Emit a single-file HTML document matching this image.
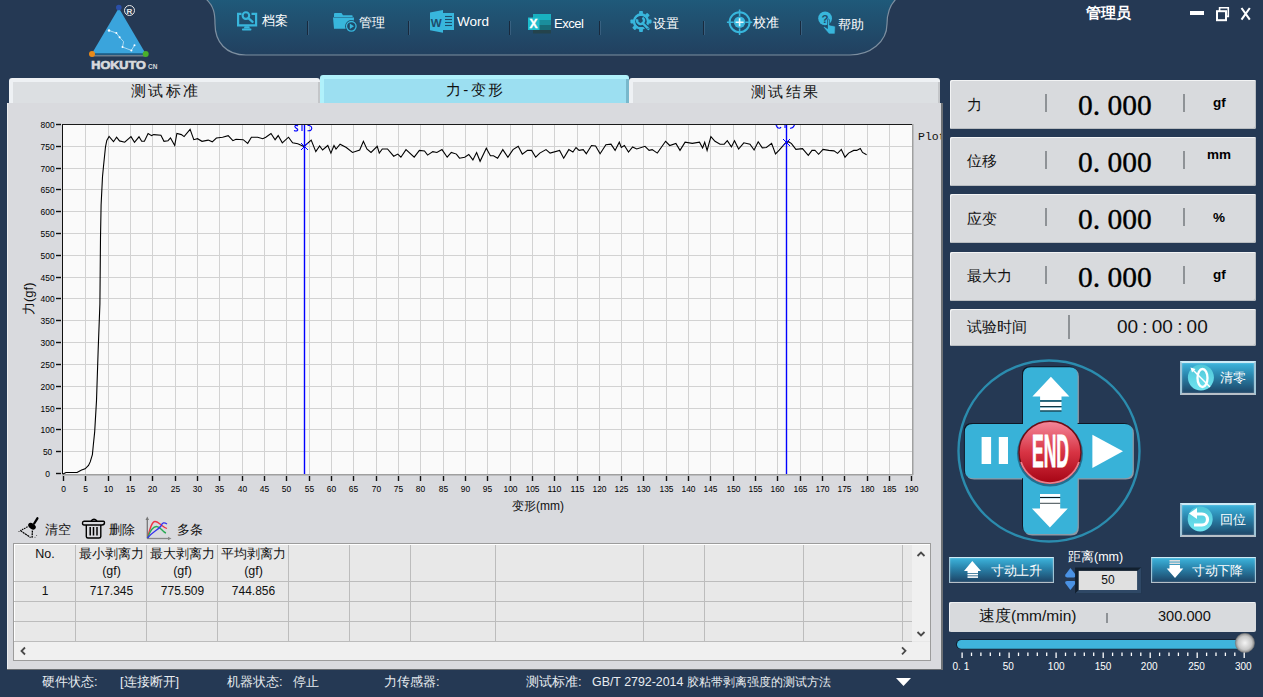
<!DOCTYPE html>
<html><head><meta charset="utf-8">
<style>
*{margin:0;padding:0;box-sizing:border-box}
html,body{width:1263px;height:697px;overflow:hidden;background:#253954;font-family:"Liberation Sans",sans-serif;}
.abs{position:absolute}
.ax{font-family:"Liberation Sans",sans-serif;font-size:9.8px;fill:#000}
.cur{font-family:"Liberation Sans",sans-serif;font-size:10px;fill:#2a2aff}
.nav{position:absolute;color:#fff;font-size:13px;line-height:14px;white-space:nowrap}
.sep{position:absolute;width:1px;height:13.5px;background:#182a3e;box-shadow:1px 0 0 rgba(140,170,200,0.22)}
.tab{position:absolute;top:78px;height:25px;background:linear-gradient(#eef1f4 0,#eef1f4 4px,transparent 4px),linear-gradient(90deg,#eef1f4 0,#eef1f4 4px,transparent 4px,transparent calc(100% - 2px),#c4c6c9 calc(100% - 2px)),#dcdfe2;border-radius:3px 3px 0 0;font-size:15px;text-align:center;line-height:26px;color:#111;letter-spacing:2.6px;text-indent:2.6px}
.vbox{position:absolute;left:950px;width:306px;background:#d8dadd;border-radius:2px;box-shadow:inset 1px 1px 0 #f2f3f4, inset -1px -1px 0 #b8bcc0}
.vlab{position:absolute;left:17px;font-size:14.5px;color:#111}
.vsep{position:absolute;width:1.5px;background:#8e9296}
.vnum{position:absolute;left:128px;font-family:"Liberation Serif",serif;font-size:29.5px;color:#000;white-space:pre;-webkit-text-stroke:0.35px #000}
.vunit{position:absolute;left:263px;font-size:13.5px;font-weight:bold;color:#000}
.st{position:absolute;top:674px;font-size:12.8px;color:#e8ecf0;white-space:nowrap}
.tbl td{border-right:1px solid #b8b8b8;border-bottom:1px solid #b8b8b8}
.btn{position:absolute;background:linear-gradient(#3db4dc,#2a86ae 40%,#1d4466);border:2px solid;border-color:#cdeaf6 #9ec4d6 #b8c0c8 #9ec4d6;box-shadow:inset 0 0 2px rgba(255,255,255,0.4);color:#fff;font-size:13px}
</style></head><body>
<!-- header nav -->
<svg class="abs" style="left:0;top:0" width="1263" height="70">
 <defs><linearGradient id="hg" x1="0" y1="0" x2="0" y2="1"><stop offset="0" stop-color="#1f5a7a"/><stop offset="1" stop-color="#22405f"/></linearGradient></defs>
 <path d="M206,-1 C214,6 215,14 215,24 C215,42 226,55 246,55 L850,55 C870,55 887,42 887,24 C887,14 889,6 896,-1 Z" fill="url(#hg)" stroke="#7d8fa0" stroke-width="1.2"/>
</svg>
<!-- logo -->
<svg class="abs" style="left:80px;top:0" width="90" height="75">
 <polygon points="38.8,8 11.8,53.8 65.7,53.8" fill="#3aa4dc"/>
 <rect x="12" y="53.3" width="54" height="1.6" fill="#1a5e8a"/><rect x="12" y="54.9" width="54" height="1.6" fill="#6b7c8c"/>
 <circle cx="38.8" cy="7.5" r="2.8" fill="#2a4fa8"/>
 <circle cx="12" cy="54" r="3" fill="#e88a1a"/>
 <circle cx="65.7" cy="54" r="3" fill="#4ab02a"/>
 <circle cx="49.5" cy="10.5" r="5" fill="none" stroke="#e8e8e8" stroke-width="1"/>
 <text x="49.5" y="13.7" text-anchor="middle" font-size="8" font-weight="bold" fill="#e8e8e8" font-family="Liberation Sans">R</text>
 <polyline points="29,30.5 36.4,33 39.6,37.3 43.6,41.7 42.5,47 51.4,50.4 54.5,45.2" fill="none" stroke="#d8eefa" stroke-width="0.7"/>
 <g fill="#fff"><circle cx="29" cy="30.5" r="1.2"/><circle cx="36.4" cy="33" r="1"/><circle cx="39.6" cy="37.3" r="1"/><circle cx="42.5" cy="47" r="1"/><circle cx="51.4" cy="50.4" r="1"/><circle cx="54.5" cy="45.2" r="1"/></g>
 <text x="11.3" y="69.2" font-size="11.2" font-weight="bold" fill="#d8dadd" stroke="#d8dadd" stroke-width="0.7" font-family="Liberation Sans" textLength="54.5" lengthAdjust="spacingAndGlyphs">HOKUTO</text>
 <text x="68" y="69" font-size="6.5" font-weight="bold" fill="#d5d8dc" font-family="Liberation Sans">CN</text>
</svg>
<!-- nav items -->
<div class="nav" style="left:262px;top:14px">档案</div>
<div class="nav" style="left:359px;top:16px">管理</div>
<div class="nav" style="left:457px;top:15px;font-size:13.5px">Word</div>
<div class="nav" style="left:554px;top:17px;letter-spacing:-0.5px">Excel</div>
<div class="nav" style="left:653px;top:16.5px">设置</div>
<div class="nav" style="left:753px;top:16px">校准</div>
<div class="nav" style="left:838px;top:17.5px">帮助</div>
<div class="sep" style="left:307px;top:21px"></div>
<div class="sep" style="left:408px;top:21px"></div>
<div class="sep" style="left:509px;top:21px"></div>
<div class="sep" style="left:599px;top:21px"></div>
<div class="sep" style="left:703px;top:21px"></div>
<div class="sep" style="left:800px;top:21px"></div>
<!-- top right -->
<div class="abs" style="left:1086px;top:4px;color:#fff;font-size:15px;font-weight:bold">管理员</div>
<div class="abs" style="left:1190px;top:11px;width:14px;height:4px;background:#fff"></div>
<svg class="abs" style="left:1215px;top:6px" width="16" height="16"><rect x="2" y="5.2" width="9" height="9" fill="none" stroke="#fff" stroke-width="2"/><path d="M4.6,5 V1.8 H13.3 V10.4 H11" fill="none" stroke="#fff" stroke-width="1.6"/></svg>
<svg class="abs" style="left:1240px;top:7px" width="12" height="14"><path d="M1.5,1 L9.8,12.6 M9.8,1 L1.5,12.6" stroke="#fff" stroke-width="2.1"/></svg>

<!-- left panel -->
<div class="tab" style="left:9px;width:311px">测试标准</div>
<div class="tab" style="left:320px;width:309px;top:75px;height:28px;background:linear-gradient(#b0f1fb 0,#b0f1fb 4px,transparent 4px),linear-gradient(90deg,#b0f1fb 0,#b0f1fb 4px,transparent 4px,transparent calc(100% - 3px),#78b8cc calc(100% - 3px)),#9cdff1;line-height:29px">力-变形</div>
<div class="tab" style="left:629px;width:311px;line-height:27px">测试结果</div>
<div class="abs" style="left:7px;top:103px;width:936px;height:567px;background:#d9dade;border-right:2px solid #6e7276;border-bottom:1.5px solid #6a6e72;box-shadow:inset 1px 0 0 #eceef0"></div>

<svg class="abs" style="left:0;top:0" width="945" height="697">
<rect x="62" y="124" width="850" height="350" fill="#fafafa"/>
<line x1="85.5" y1="125" x2="85.5" y2="474" stroke="#d2d2d2" stroke-width="1"/>
<line x1="108.5" y1="125" x2="108.5" y2="474" stroke="#d2d2d2" stroke-width="1"/>
<line x1="130.5" y1="125" x2="130.5" y2="474" stroke="#d2d2d2" stroke-width="1"/>
<line x1="152.5" y1="125" x2="152.5" y2="474" stroke="#d2d2d2" stroke-width="1"/>
<line x1="175.5" y1="125" x2="175.5" y2="474" stroke="#d2d2d2" stroke-width="1"/>
<line x1="197.5" y1="125" x2="197.5" y2="474" stroke="#d2d2d2" stroke-width="1"/>
<line x1="219.5" y1="125" x2="219.5" y2="474" stroke="#d2d2d2" stroke-width="1"/>
<line x1="242.5" y1="125" x2="242.5" y2="474" stroke="#d2d2d2" stroke-width="1"/>
<line x1="264.5" y1="125" x2="264.5" y2="474" stroke="#d2d2d2" stroke-width="1"/>
<line x1="286.5" y1="125" x2="286.5" y2="474" stroke="#d2d2d2" stroke-width="1"/>
<line x1="309.5" y1="125" x2="309.5" y2="474" stroke="#d2d2d2" stroke-width="1"/>
<line x1="331.5" y1="125" x2="331.5" y2="474" stroke="#d2d2d2" stroke-width="1"/>
<line x1="353.5" y1="125" x2="353.5" y2="474" stroke="#d2d2d2" stroke-width="1"/>
<line x1="376.5" y1="125" x2="376.5" y2="474" stroke="#d2d2d2" stroke-width="1"/>
<line x1="398.5" y1="125" x2="398.5" y2="474" stroke="#d2d2d2" stroke-width="1"/>
<line x1="420.5" y1="125" x2="420.5" y2="474" stroke="#d2d2d2" stroke-width="1"/>
<line x1="443.5" y1="125" x2="443.5" y2="474" stroke="#d2d2d2" stroke-width="1"/>
<line x1="465.5" y1="125" x2="465.5" y2="474" stroke="#d2d2d2" stroke-width="1"/>
<line x1="487.5" y1="125" x2="487.5" y2="474" stroke="#d2d2d2" stroke-width="1"/>
<line x1="510.5" y1="125" x2="510.5" y2="474" stroke="#d2d2d2" stroke-width="1"/>
<line x1="532.5" y1="125" x2="532.5" y2="474" stroke="#d2d2d2" stroke-width="1"/>
<line x1="554.5" y1="125" x2="554.5" y2="474" stroke="#d2d2d2" stroke-width="1"/>
<line x1="577.5" y1="125" x2="577.5" y2="474" stroke="#d2d2d2" stroke-width="1"/>
<line x1="599.5" y1="125" x2="599.5" y2="474" stroke="#d2d2d2" stroke-width="1"/>
<line x1="621.5" y1="125" x2="621.5" y2="474" stroke="#d2d2d2" stroke-width="1"/>
<line x1="643.5" y1="125" x2="643.5" y2="474" stroke="#d2d2d2" stroke-width="1"/>
<line x1="666.5" y1="125" x2="666.5" y2="474" stroke="#d2d2d2" stroke-width="1"/>
<line x1="688.5" y1="125" x2="688.5" y2="474" stroke="#d2d2d2" stroke-width="1"/>
<line x1="710.5" y1="125" x2="710.5" y2="474" stroke="#d2d2d2" stroke-width="1"/>
<line x1="733.5" y1="125" x2="733.5" y2="474" stroke="#d2d2d2" stroke-width="1"/>
<line x1="755.5" y1="125" x2="755.5" y2="474" stroke="#d2d2d2" stroke-width="1"/>
<line x1="777.5" y1="125" x2="777.5" y2="474" stroke="#d2d2d2" stroke-width="1"/>
<line x1="800.5" y1="125" x2="800.5" y2="474" stroke="#d2d2d2" stroke-width="1"/>
<line x1="822.5" y1="125" x2="822.5" y2="474" stroke="#d2d2d2" stroke-width="1"/>
<line x1="844.5" y1="125" x2="844.5" y2="474" stroke="#d2d2d2" stroke-width="1"/>
<line x1="867.5" y1="125" x2="867.5" y2="474" stroke="#d2d2d2" stroke-width="1"/>
<line x1="889.5" y1="125" x2="889.5" y2="474" stroke="#d2d2d2" stroke-width="1"/>
<line x1="63" y1="451.5" x2="912" y2="451.5" stroke="#d2d2d2" stroke-width="1"/>
<line x1="63" y1="429.5" x2="912" y2="429.5" stroke="#d2d2d2" stroke-width="1"/>
<line x1="63" y1="408.5" x2="912" y2="408.5" stroke="#d2d2d2" stroke-width="1"/>
<line x1="63" y1="386.5" x2="912" y2="386.5" stroke="#d2d2d2" stroke-width="1"/>
<line x1="63" y1="364.5" x2="912" y2="364.5" stroke="#d2d2d2" stroke-width="1"/>
<line x1="63" y1="342.5" x2="912" y2="342.5" stroke="#d2d2d2" stroke-width="1"/>
<line x1="63" y1="320.5" x2="912" y2="320.5" stroke="#d2d2d2" stroke-width="1"/>
<line x1="63" y1="298.5" x2="912" y2="298.5" stroke="#d2d2d2" stroke-width="1"/>
<line x1="63" y1="277.5" x2="912" y2="277.5" stroke="#d2d2d2" stroke-width="1"/>
<line x1="63" y1="255.5" x2="912" y2="255.5" stroke="#d2d2d2" stroke-width="1"/>
<line x1="63" y1="233.5" x2="912" y2="233.5" stroke="#d2d2d2" stroke-width="1"/>
<line x1="63" y1="211.5" x2="912" y2="211.5" stroke="#d2d2d2" stroke-width="1"/>
<line x1="63" y1="189.5" x2="912" y2="189.5" stroke="#d2d2d2" stroke-width="1"/>
<line x1="63" y1="168.5" x2="912" y2="168.5" stroke="#d2d2d2" stroke-width="1"/>
<line x1="63" y1="146.5" x2="912" y2="146.5" stroke="#d2d2d2" stroke-width="1"/>
<rect x="62" y="124" width="1" height="351" fill="#111"/>
<rect x="62" y="124" width="851" height="1" fill="#1a1a1a"/>
<rect x="62" y="474" width="851" height="1.5" fill="#a0a0a0"/>
<rect x="912" y="124" width="1.5" height="351" fill="#a0a0a0"/>
<line x1="56" y1="473.5" x2="61" y2="473.5" stroke="#111" stroke-width="1.4"/>
<text x="45.25" y="477.1" class="ax" textLength="4.7" lengthAdjust="spacingAndGlyphs">0</text>
<line x1="56" y1="451.5" x2="61" y2="451.5" stroke="#111" stroke-width="1.4"/>
<text x="42.90" y="455.1" class="ax" textLength="9.4" lengthAdjust="spacingAndGlyphs">50</text>
<line x1="56" y1="429.5" x2="61" y2="429.5" stroke="#111" stroke-width="1.4"/>
<text x="40.55" y="433.1" class="ax" textLength="14.1" lengthAdjust="spacingAndGlyphs">100</text>
<line x1="56" y1="408.5" x2="61" y2="408.5" stroke="#111" stroke-width="1.4"/>
<text x="40.55" y="412.1" class="ax" textLength="14.1" lengthAdjust="spacingAndGlyphs">150</text>
<line x1="56" y1="386.5" x2="61" y2="386.5" stroke="#111" stroke-width="1.4"/>
<text x="40.55" y="390.1" class="ax" textLength="14.1" lengthAdjust="spacingAndGlyphs">200</text>
<line x1="56" y1="364.5" x2="61" y2="364.5" stroke="#111" stroke-width="1.4"/>
<text x="40.55" y="368.1" class="ax" textLength="14.1" lengthAdjust="spacingAndGlyphs">250</text>
<line x1="56" y1="342.5" x2="61" y2="342.5" stroke="#111" stroke-width="1.4"/>
<text x="40.55" y="346.1" class="ax" textLength="14.1" lengthAdjust="spacingAndGlyphs">300</text>
<line x1="56" y1="320.5" x2="61" y2="320.5" stroke="#111" stroke-width="1.4"/>
<text x="40.55" y="324.1" class="ax" textLength="14.1" lengthAdjust="spacingAndGlyphs">350</text>
<line x1="56" y1="298.5" x2="61" y2="298.5" stroke="#111" stroke-width="1.4"/>
<text x="40.55" y="302.1" class="ax" textLength="14.1" lengthAdjust="spacingAndGlyphs">400</text>
<line x1="56" y1="277.5" x2="61" y2="277.5" stroke="#111" stroke-width="1.4"/>
<text x="40.55" y="281.1" class="ax" textLength="14.1" lengthAdjust="spacingAndGlyphs">450</text>
<line x1="56" y1="255.5" x2="61" y2="255.5" stroke="#111" stroke-width="1.4"/>
<text x="40.55" y="259.1" class="ax" textLength="14.1" lengthAdjust="spacingAndGlyphs">500</text>
<line x1="56" y1="233.5" x2="61" y2="233.5" stroke="#111" stroke-width="1.4"/>
<text x="40.55" y="237.1" class="ax" textLength="14.1" lengthAdjust="spacingAndGlyphs">550</text>
<line x1="56" y1="211.5" x2="61" y2="211.5" stroke="#111" stroke-width="1.4"/>
<text x="40.55" y="215.1" class="ax" textLength="14.1" lengthAdjust="spacingAndGlyphs">600</text>
<line x1="56" y1="189.5" x2="61" y2="189.5" stroke="#111" stroke-width="1.4"/>
<text x="40.55" y="193.1" class="ax" textLength="14.1" lengthAdjust="spacingAndGlyphs">650</text>
<line x1="56" y1="168.5" x2="61" y2="168.5" stroke="#111" stroke-width="1.4"/>
<text x="40.55" y="172.1" class="ax" textLength="14.1" lengthAdjust="spacingAndGlyphs">700</text>
<line x1="56" y1="146.5" x2="61" y2="146.5" stroke="#111" stroke-width="1.4"/>
<text x="40.55" y="150.1" class="ax" textLength="14.1" lengthAdjust="spacingAndGlyphs">750</text>
<line x1="56" y1="124.5" x2="61" y2="124.5" stroke="#111" stroke-width="1.4"/>
<text x="40.55" y="128.1" class="ax" textLength="14.1" lengthAdjust="spacingAndGlyphs">800</text>
<line x1="63.5" y1="476" x2="63.5" y2="481" stroke="#111" stroke-width="1.4"/>
<text x="61.15" y="492" class="ax" textLength="4.7" lengthAdjust="spacingAndGlyphs">0</text>
<line x1="85.5" y1="476" x2="85.5" y2="481" stroke="#111" stroke-width="1.4"/>
<text x="83.15" y="492" class="ax" textLength="4.7" lengthAdjust="spacingAndGlyphs">5</text>
<line x1="108.5" y1="476" x2="108.5" y2="481" stroke="#111" stroke-width="1.4"/>
<text x="103.80" y="492" class="ax" textLength="9.4" lengthAdjust="spacingAndGlyphs">10</text>
<line x1="130.5" y1="476" x2="130.5" y2="481" stroke="#111" stroke-width="1.4"/>
<text x="125.80" y="492" class="ax" textLength="9.4" lengthAdjust="spacingAndGlyphs">15</text>
<line x1="152.5" y1="476" x2="152.5" y2="481" stroke="#111" stroke-width="1.4"/>
<text x="147.80" y="492" class="ax" textLength="9.4" lengthAdjust="spacingAndGlyphs">20</text>
<line x1="175.5" y1="476" x2="175.5" y2="481" stroke="#111" stroke-width="1.4"/>
<text x="170.80" y="492" class="ax" textLength="9.4" lengthAdjust="spacingAndGlyphs">25</text>
<line x1="197.5" y1="476" x2="197.5" y2="481" stroke="#111" stroke-width="1.4"/>
<text x="192.80" y="492" class="ax" textLength="9.4" lengthAdjust="spacingAndGlyphs">30</text>
<line x1="219.5" y1="476" x2="219.5" y2="481" stroke="#111" stroke-width="1.4"/>
<text x="214.80" y="492" class="ax" textLength="9.4" lengthAdjust="spacingAndGlyphs">35</text>
<line x1="242.5" y1="476" x2="242.5" y2="481" stroke="#111" stroke-width="1.4"/>
<text x="237.80" y="492" class="ax" textLength="9.4" lengthAdjust="spacingAndGlyphs">40</text>
<line x1="264.5" y1="476" x2="264.5" y2="481" stroke="#111" stroke-width="1.4"/>
<text x="259.80" y="492" class="ax" textLength="9.4" lengthAdjust="spacingAndGlyphs">45</text>
<line x1="286.5" y1="476" x2="286.5" y2="481" stroke="#111" stroke-width="1.4"/>
<text x="281.80" y="492" class="ax" textLength="9.4" lengthAdjust="spacingAndGlyphs">50</text>
<line x1="309.5" y1="476" x2="309.5" y2="481" stroke="#111" stroke-width="1.4"/>
<text x="304.80" y="492" class="ax" textLength="9.4" lengthAdjust="spacingAndGlyphs">55</text>
<line x1="331.5" y1="476" x2="331.5" y2="481" stroke="#111" stroke-width="1.4"/>
<text x="326.80" y="492" class="ax" textLength="9.4" lengthAdjust="spacingAndGlyphs">60</text>
<line x1="353.5" y1="476" x2="353.5" y2="481" stroke="#111" stroke-width="1.4"/>
<text x="348.80" y="492" class="ax" textLength="9.4" lengthAdjust="spacingAndGlyphs">65</text>
<line x1="376.5" y1="476" x2="376.5" y2="481" stroke="#111" stroke-width="1.4"/>
<text x="371.80" y="492" class="ax" textLength="9.4" lengthAdjust="spacingAndGlyphs">70</text>
<line x1="398.5" y1="476" x2="398.5" y2="481" stroke="#111" stroke-width="1.4"/>
<text x="393.80" y="492" class="ax" textLength="9.4" lengthAdjust="spacingAndGlyphs">75</text>
<line x1="420.5" y1="476" x2="420.5" y2="481" stroke="#111" stroke-width="1.4"/>
<text x="415.80" y="492" class="ax" textLength="9.4" lengthAdjust="spacingAndGlyphs">80</text>
<line x1="443.5" y1="476" x2="443.5" y2="481" stroke="#111" stroke-width="1.4"/>
<text x="438.80" y="492" class="ax" textLength="9.4" lengthAdjust="spacingAndGlyphs">85</text>
<line x1="465.5" y1="476" x2="465.5" y2="481" stroke="#111" stroke-width="1.4"/>
<text x="460.80" y="492" class="ax" textLength="9.4" lengthAdjust="spacingAndGlyphs">90</text>
<line x1="487.5" y1="476" x2="487.5" y2="481" stroke="#111" stroke-width="1.4"/>
<text x="482.80" y="492" class="ax" textLength="9.4" lengthAdjust="spacingAndGlyphs">95</text>
<line x1="510.5" y1="476" x2="510.5" y2="481" stroke="#111" stroke-width="1.4"/>
<text x="503.45" y="492" class="ax" textLength="14.1" lengthAdjust="spacingAndGlyphs">100</text>
<line x1="532.5" y1="476" x2="532.5" y2="481" stroke="#111" stroke-width="1.4"/>
<text x="525.45" y="492" class="ax" textLength="14.1" lengthAdjust="spacingAndGlyphs">105</text>
<line x1="554.5" y1="476" x2="554.5" y2="481" stroke="#111" stroke-width="1.4"/>
<text x="547.45" y="492" class="ax" textLength="14.1" lengthAdjust="spacingAndGlyphs">110</text>
<line x1="577.5" y1="476" x2="577.5" y2="481" stroke="#111" stroke-width="1.4"/>
<text x="570.45" y="492" class="ax" textLength="14.1" lengthAdjust="spacingAndGlyphs">115</text>
<line x1="599.5" y1="476" x2="599.5" y2="481" stroke="#111" stroke-width="1.4"/>
<text x="592.45" y="492" class="ax" textLength="14.1" lengthAdjust="spacingAndGlyphs">120</text>
<line x1="621.5" y1="476" x2="621.5" y2="481" stroke="#111" stroke-width="1.4"/>
<text x="614.45" y="492" class="ax" textLength="14.1" lengthAdjust="spacingAndGlyphs">125</text>
<line x1="643.5" y1="476" x2="643.5" y2="481" stroke="#111" stroke-width="1.4"/>
<text x="636.45" y="492" class="ax" textLength="14.1" lengthAdjust="spacingAndGlyphs">130</text>
<line x1="666.5" y1="476" x2="666.5" y2="481" stroke="#111" stroke-width="1.4"/>
<text x="659.45" y="492" class="ax" textLength="14.1" lengthAdjust="spacingAndGlyphs">135</text>
<line x1="688.5" y1="476" x2="688.5" y2="481" stroke="#111" stroke-width="1.4"/>
<text x="681.45" y="492" class="ax" textLength="14.1" lengthAdjust="spacingAndGlyphs">140</text>
<line x1="710.5" y1="476" x2="710.5" y2="481" stroke="#111" stroke-width="1.4"/>
<text x="703.45" y="492" class="ax" textLength="14.1" lengthAdjust="spacingAndGlyphs">145</text>
<line x1="733.5" y1="476" x2="733.5" y2="481" stroke="#111" stroke-width="1.4"/>
<text x="726.45" y="492" class="ax" textLength="14.1" lengthAdjust="spacingAndGlyphs">150</text>
<line x1="755.5" y1="476" x2="755.5" y2="481" stroke="#111" stroke-width="1.4"/>
<text x="748.45" y="492" class="ax" textLength="14.1" lengthAdjust="spacingAndGlyphs">155</text>
<line x1="777.5" y1="476" x2="777.5" y2="481" stroke="#111" stroke-width="1.4"/>
<text x="770.45" y="492" class="ax" textLength="14.1" lengthAdjust="spacingAndGlyphs">160</text>
<line x1="800.5" y1="476" x2="800.5" y2="481" stroke="#111" stroke-width="1.4"/>
<text x="793.45" y="492" class="ax" textLength="14.1" lengthAdjust="spacingAndGlyphs">165</text>
<line x1="822.5" y1="476" x2="822.5" y2="481" stroke="#111" stroke-width="1.4"/>
<text x="815.45" y="492" class="ax" textLength="14.1" lengthAdjust="spacingAndGlyphs">170</text>
<line x1="844.5" y1="476" x2="844.5" y2="481" stroke="#111" stroke-width="1.4"/>
<text x="837.45" y="492" class="ax" textLength="14.1" lengthAdjust="spacingAndGlyphs">175</text>
<line x1="867.5" y1="476" x2="867.5" y2="481" stroke="#111" stroke-width="1.4"/>
<text x="860.45" y="492" class="ax" textLength="14.1" lengthAdjust="spacingAndGlyphs">180</text>
<line x1="889.5" y1="476" x2="889.5" y2="481" stroke="#111" stroke-width="1.4"/>
<text x="882.45" y="492" class="ax" textLength="14.1" lengthAdjust="spacingAndGlyphs">185</text>
<line x1="911.5" y1="476" x2="911.5" y2="481" stroke="#111" stroke-width="1.4"/>
<text x="904.45" y="492" class="ax" textLength="14.1" lengthAdjust="spacingAndGlyphs">190</text>
<path d="M63.0,474.0 L66.0,472.5 L77.0,472.5 L81.6,470.1 L85.1,468.8 L88.5,465.4 L90.2,461.9 L92.4,454.6 L93.3,445.2 L94.7,431.6 L96.5,400.6 L98.2,348.9 L99.9,304.0 L100.5,237.8 L101.1,205.0 L102.5,176.7 L103.6,165.2 L105.5,146.8 L106.8,140.5 L109.1,136.5 L113.5,141.7 L116.6,137.1 L119.5,140.9 L124.7,142.2 L131.0,136.6 L134.5,142.4 L139.0,136.8 L141.7,141.3 L144.4,141.3 L148.1,133.5 L151.6,135.6 L153.7,134.6 L160.9,135.2 L164.0,141.3 L168.0,140.7 L170.5,138.0 L174.7,145.5 L176.9,133.5 L181.4,134.6 L184.1,136.6 L190.1,129.4 L193.8,139.7 L197.5,138.7 L202.0,141.3 L208.2,140.1 L212.3,141.8 L216.4,138.0 L222.6,137.2 L228.2,135.6 L232.9,140.7 L236.0,139.3 L243.2,139.7 L247.7,143.4 L251.4,137.2 L257.6,137.2 L262.8,138.7 L265.8,137.2 L271.0,133.5 L275.1,139.7 L278.2,135.6 L282.3,142.8 L288.5,137.2 L292.6,142.8 L297.8,143.8 L304.0,146.5 L311.2,140.1 L315.8,151.6 L319.6,145.9 L322.6,150.0 L327.8,145.5 L330.9,153.1 L334.0,145.5 L336.0,149.0 L340.1,144.2 L346.3,147.5 L352.5,152.5 L359.7,150.0 L363.4,141.3 L366.9,149.0 L371.0,152.5 L377.2,146.3 L379.3,153.1 L382.3,149.0 L387.5,149.0 L393.7,156.2 L397.8,154.1 L400.9,157.2 L406.0,149.6 L414.2,157.2 L419.4,150.4 L424.5,151.0 L427.6,155.1 L432.8,151.6 L436.9,152.5 L442.0,149.6 L447.2,157.2 L451.3,152.5 L456.4,154.1 L459.5,158.2 L464.7,157.2 L468.8,154.5 L472.9,159.9 L476.6,152.5 L480.1,161.3 L486.3,148.3 L490.4,155.8 L493.5,155.8 L497.6,158.2 L502.8,149.6 L507.9,157.2 L513.0,149.6 L518.2,146.3 L522.3,154.1 L527.5,150.4 L531.6,150.4 L535.7,157.2 L539.8,153.1 L546.0,149.6 L550.1,153.1 L559.6,150.4 L563.7,158.2 L568.8,149.6 L572.9,152.0 L576.0,147.5 L579.1,150.4 L583.2,149.6 L586.3,153.7 L591.5,145.5 L595.6,145.9 L600.1,153.7 L605.9,144.8 L611.0,144.2 L615.1,150.4 L619.3,142.2 L621.3,147.5 L624.4,145.5 L628.5,152.0 L632.6,146.9 L636.7,149.0 L645.0,146.3 L649.1,150.4 L652.2,149.6 L657.3,153.1 L665.6,141.3 L669.7,145.5 L675.9,143.4 L680.0,150.4 L685.1,142.2 L692.3,143.4 L699.5,142.2 L702.6,147.9 L704.7,142.2 L707.1,150.4 L710.9,136.6 L715.0,141.3 L720.1,144.2 L724.2,144.2 L727.3,140.7 L731.4,146.9 L734.5,140.7 L738.6,149.0 L743.8,142.8 L750.0,144.2 L754.1,150.0 L758.2,141.8 L762.3,147.9 L766.4,147.5 L771.6,143.4 L775.5,154.0 L779.2,150.2 L785.5,143.0 L788.6,141.7 L791.5,143.6 L795.9,149.4 L802.5,148.7 L808.3,155.3 L812.0,150.4 L814.9,150.2 L818.6,154.3 L823.0,149.4 L828.8,150.4 L834.0,150.9 L837.6,153.4 L841.3,149.4 L845.0,157.2 L848.6,153.1 L853.7,150.4 L856.7,150.4 L860.3,148.4 L862.5,152.4 L866.6,154.8" fill="none" stroke="#000" stroke-width="1.1" stroke-linejoin="miter"/>
<line x1="304.5" y1="125" x2="304.5" y2="474" stroke="#0000ff" stroke-width="1.4"/>
<path d="M301.0,143.0 L308.0,150.0 M308.0,143.0 L301.0,150.0" stroke="#0000ff" stroke-width="1"/>
<line x1="786.5" y1="125" x2="786.5" y2="474" stroke="#0000ff" stroke-width="1.4"/>
<path d="M783.0,139.0 L790.0,146.0 M790.0,139.0 L783.0,146.0" stroke="#0000ff" stroke-width="1"/>
<g stroke="#0000ff" stroke-width="1.1" fill="none"><path d="M298,126 Q297,125.2 295.5,125.5 Q294,126.5 296,128 Q298.5,129.5 297.5,130.5 Q296,131.5 294,130.5"/><path d="M302,125 V131"/><path d="M307.5,125.5 H309.5 Q312,126.5 311.8,128.2 Q311.5,130.8 309,130.8 H307.5"/><path d="M776,125 Q777,128 779,128.3 Q780.5,128.2 781,127"/><path d="M785,125 V128"/><path d="M790,128.2 Q793,128.5 794.5,125"/></g>
</svg>
<div class="abs" style="left:918px;top:130px;font-family:'Liberation Mono',monospace;font-size:11.5px;line-height:13px;color:#111;width:23px;overflow:hidden;white-space:nowrap">Plot</div>
<div class="abs" style="font-size:13px;line-height:15px;color:#111;transform:rotate(-90deg);transform-origin:0 0;white-space:nowrap;left:21px;top:315px">力(gf)</div>
<div class="abs" style="left:512px;top:498px;font-size:12px;color:#111">变形(mm)</div>

<!-- toolbar -->
<div class="abs" style="left:45px;top:521px;font-size:13px;color:#111">清空</div>
<div class="abs" style="left:109px;top:521px;font-size:13px;color:#111">删除</div>
<div class="abs" style="left:177px;top:521px;font-size:13px;color:#111">多条</div>

<!-- table -->
<div class="abs" style="left:13px;top:543px;width:918px;height:118px;background:#e8e8e8;border:1px solid #9c9c9c;box-shadow:inset 1px 1px 0 #fff"></div>

<!-- right panel -->
<div class="vbox" style="top:80px;height:49px"><div class="vlab" style="top:16px">力</div><div class="vsep" style="left:95px;top:14px;height:18px"></div><div class="vnum" style="top:9px">0. 000</div><div class="vsep" style="left:233px;top:14px;height:18px"></div><div class="vunit" style="top:15px">gf</div></div>
<div class="vbox" style="top:137px;height:49px"><div class="vlab" style="top:15px">位移</div><div class="vsep" style="left:95px;top:14px;height:18px"></div><div class="vnum" style="top:9px">0. 000</div><div class="vsep" style="left:233px;top:14px;height:18px"></div><div class="vunit" style="top:10px;left:257px">mm</div></div>
<div class="vbox" style="top:194px;height:49px"><div class="vlab" style="top:16px">应变</div><div class="vsep" style="left:95px;top:14px;height:18px"></div><div class="vnum" style="top:9px">0. 000</div><div class="vsep" style="left:233px;top:14px;height:18px"></div><div class="vunit" style="top:16px">%</div></div>
<div class="vbox" style="top:252px;height:49px"><div class="vlab" style="top:15px">最大力</div><div class="vsep" style="left:95px;top:14px;height:18px"></div><div class="vnum" style="top:9px">0. 000</div><div class="vsep" style="left:233px;top:14px;height:18px"></div><div class="vunit" style="top:15px">gf</div></div>
<div class="vbox" style="top:309px;height:37px"><div class="vlab" style="top:9px">试验时间</div><div class="vsep" style="left:118px;top:6px;height:24px"></div><div class="abs" style="left:167px;top:7px;font-size:19px;color:#111;white-space:nowrap">00<span style="margin:0 4.2px">:</span>00<span style="margin:0 4.2px">:</span>00</div></div>


<!-- nav icons -->
<svg class="abs" style="left:0;top:0" width="900" height="40">
 <g fill="#38b6dc" stroke="none">
  <!-- monitor -->
  <path d="M237,12.8 H241.5 V15 H239.2 V24.2 H255 V15 H251.5 V12.8 H257.2 V26.4 H237 Z"/>
  <polygon points="244.6,26.3 249.2,26.3 250,28.6 243.8,28.6"/><rect x="242" y="28.4" width="9.4" height="2" rx="0.7"/>
 </g>
 <circle cx="245.9" cy="15.6" r="3.3" fill="none" stroke="#38b6dc" stroke-width="2.1"/>
 <line x1="248.3" y1="18.2" x2="252.6" y2="21.8" stroke="#38b6dc" stroke-width="2.3" stroke-linecap="round"/>
 <!-- folder -->
 <g fill="#38b6dc">
  <path d="M334,14 Q334,13 335,13 H341.5 L343,15.2 H352 Q352.6,15.2 352.6,16 V17 H334 Z"/>
  <path d="M333,17.6 H354 L353.3,28.8 H334 Z"/>
 </g>
 <circle cx="351.3" cy="26.3" r="6.2" fill="#1f4868"/>
 <circle cx="351.3" cy="26.3" r="4.8" fill="none" stroke="#38b6dc" stroke-width="1.3"/>
 <polygon points="349.8,23.6 349.8,29 354,26.3" fill="#38b6dc"/>
 <!-- word -->
 <polygon points="430,12.6 443,10 443,32.8 430,30.2" fill="#38b6dc"/>
 <rect x="443" y="13" width="11" height="17" fill="#38b6dc"/>
 <g stroke="#1d4c6c" stroke-width="1.1"><line x1="445" y1="16.5" x2="452" y2="16.5"/><line x1="445" y1="19.5" x2="452" y2="19.5"/><line x1="445" y1="22.5" x2="452" y2="22.5"/><line x1="445" y1="25.5" x2="452" y2="25.5"/></g>
 <text x="430.8" y="27" font-family="Liberation Sans" font-weight="bold" font-size="11.5" fill="#1d4c6c" textLength="11" lengthAdjust="spacingAndGlyphs">W</text>
 <!-- excel -->
 <rect x="533" y="14" width="18" height="6" fill="#19b0c0"/>
 <rect x="533" y="20" width="18" height="5" fill="#1a8e9c"/>
 <rect x="533" y="25" width="18" height="5" fill="#176c78"/>
 <rect x="533" y="30" width="18" height="3.5" fill="#24434c"/>
 <rect x="528" y="17.5" width="11.5" height="12.5" fill="#1dbccc"/>
 <text x="529.5" y="28.3" font-family="Liberation Sans" font-weight="bold" font-size="12" fill="#fff" stroke="#fff" stroke-width="0.4">X</text>
 <!-- gear -->
 <g transform="translate(641,21.5)">
  <g fill="#38b6dc">
  <rect x="-1.9" y="-10.6" width="3.8" height="4" rx="0.8"/>
  <rect x="-1.9" y="-10.6" width="3.8" height="4" rx="0.8" transform="rotate(45)"/>
  <rect x="-1.9" y="-10.6" width="3.8" height="4" rx="0.8" transform="rotate(90)"/>
  <rect x="-1.9" y="-10.6" width="3.8" height="4" rx="0.8" transform="rotate(135)"/>
  <rect x="-1.9" y="-10.6" width="3.8" height="4" rx="0.8" transform="rotate(180)"/>
  <rect x="-1.9" y="-10.6" width="3.8" height="4" rx="0.8" transform="rotate(225)"/>
  <rect x="-1.9" y="-10.6" width="3.8" height="4" rx="0.8" transform="rotate(270)"/>
  </g>
  <circle r="6.9" fill="none" stroke="#38b6dc" stroke-width="2.6"/>
  <circle r="5.5" fill="#1f4a6a"/>
  <line x1="1.5" y1="1.5" x2="7.6" y2="7.6" stroke="#1f4a6a" stroke-width="4.4" stroke-linecap="round"/>
  <line x1="1.5" y1="1.5" x2="7.4" y2="7.4" stroke="#38b6dc" stroke-width="2.4" stroke-linecap="round"/>
  <path d="M-3.6,-2.2 A3.4,3.4 0 1 0 1.4,-3.8" fill="none" stroke="#38b6dc" stroke-width="2.3"/>
  <circle cx="7" cy="7" r="0.6" fill="#1f4a6a"/>
 </g>
 <!-- target -->
 <g transform="translate(739.6,22.2)">
  <circle r="10" fill="none" stroke="#38b6dc" stroke-width="2"/>
  <circle r="5.8" fill="#38b6dc"/>
  <path d="M0,-12.7 V-6 M0,6 V12.7 M-12.7,0 H-6 M6,0 H12.7" stroke="#38b6dc" stroke-width="1.6"/>
  <path d="M0,-4 V4 M-4,0 H4" stroke="#e8f6fa" stroke-width="1.6"/>
 </g>
 <!-- help -->
 <circle cx="825.1" cy="18.4" r="6.9" fill="#38b6dc"/>
 <text x="821.6" y="22.8" font-family="Liberation Sans" font-weight="bold" font-size="11.5" fill="#1f4c6c">?</text>
 <path d="M827.5,19.5 Q828.5,18.5 829.3,19.5 L829.5,25 L834.5,26 Q835.5,26.3 835.3,27.5 L835,34 H829 L823.5,27.5 Q823.5,26.3 824.8,26.8 L827.5,28.5 Z" fill="#38b6dc" stroke="#1f4c6c" stroke-width="0.7"/>
</svg>

<!-- toolbar icons -->
<svg class="abs" style="left:0;top:510px" width="180" height="35">
 <g stroke="#000" fill="none">
  <line x1="37.4" y1="8.3" x2="34.2" y2="13.5" stroke-width="2.3" stroke-linecap="round"/>
  <ellipse cx="32" cy="16.2" rx="4.2" ry="2.7" transform="rotate(35 32 16.2)" fill="#000" stroke="none"/>
  <path d="M27.6,16.8 L20.4,20.6" stroke-width="1.1" stroke-dasharray="1.6 0.8"/>
  <path d="M20.4,20.6 L30.6,27.6" stroke-width="1.2" stroke-dasharray="2.2 0.6"/>
  <path d="M32.4,20.6 L32.1,27.8" stroke-width="1.3" stroke-dasharray="2 0.7"/>
  <circle cx="19" cy="21.6" r="0.5" fill="#000" stroke="none"/><circle cx="36.6" cy="25.6" r="0.5" fill="#444" stroke="none"/><circle cx="35" cy="27.3" r="0.5" fill="#444" stroke="none"/>
 </g>
 <g stroke="#000" fill="none" stroke-width="1.4">
  <path d="M91,11 Q94,7.5 97,11"/>
  <path d="M84,11.2 H103.5 Q104.5,11.2 104.5,12.5 Q104.5,15 102,15 H84 Q82.5,15 82.5,13 Q82.5,11.2 84,11.2 Z"/>
  <path d="M86.3,15 V26.5 Q86.3,28 88,28 H99 Q100.8,28 100.8,26.5 V15"/>
  <line x1="90.2" y1="17" x2="90.2" y2="25.5" stroke-width="1.5"/><line x1="93.5" y1="17" x2="93.5" y2="25.5" stroke-width="1.5"/><line x1="97" y1="17" x2="97" y2="25.5" stroke-width="1.5"/>
 </g>
 <g fill="none" stroke-width="1.3">
  <path d="M147.3,28.5 V9" stroke="#777"/><polygon points="145.5,10 149,10 147.3,6.5" fill="#777"/>
  <path d="M147,28.5 H169" stroke="#888"/><polygon points="168,26.8 168,30.2 171.5,28.5" fill="#888"/>
  <path d="M147.5,28 C150,18 152,11.5 155,11.5 C159,11.5 162,17 167,18.5" stroke="#ee3344"/>
  <path d="M147.5,28 C150,21 152.5,16.5 156.5,16.5 C161,16.5 162,22 166,23" stroke="#2aaa55"/>
  <path d="M147.5,28 C152,22 158,20 161,16 C162.5,12.5 164,12 167,14" stroke="#3333ee"/>
 </g>
</svg>

<!-- table -->
<svg class="abs" style="left:0;top:0" width="945" height="697">
 <g stroke="#bcbcbc" stroke-width="1">
  <line x1="75.5" y1="545" x2="75.5" y2="641"/><line x1="146.5" y1="545" x2="146.5" y2="641"/><line x1="217.5" y1="545" x2="217.5" y2="641"/>
  <line x1="288.5" y1="545" x2="288.5" y2="641"/><line x1="349.5" y1="545" x2="349.5" y2="641"/><line x1="410.5" y1="545" x2="410.5" y2="641"/>
  <line x1="495.5" y1="545" x2="495.5" y2="641"/><line x1="643.5" y1="545" x2="643.5" y2="641"/><line x1="704.5" y1="545" x2="704.5" y2="641"/>
  <line x1="803.5" y1="545" x2="803.5" y2="641"/><line x1="902.5" y1="545" x2="902.5" y2="641"/>
  <line x1="14" y1="581.5" x2="912" y2="581.5"/><line x1="14" y1="601.5" x2="912" y2="601.5"/><line x1="14" y1="621.5" x2="912" y2="621.5"/><line x1="14" y1="641.5" x2="912" y2="641.5"/>
 </g>
 <rect x="912" y="545" width="18" height="96" fill="#f0f0f0"/>
 <rect x="14" y="642" width="916" height="18" fill="#f0f0f0"/>
 <g stroke="#4a4a4a" stroke-width="1.8" fill="none">
  <path d="M917.5,556 L921,552.5 L924.5,556"/><path d="M917.5,632 L921,635.5 L924.5,632"/>
  <path d="M25,647.5 L21.5,651 L25,654.5"/><path d="M902,647.3 L905.5,650.8 L902,654.3"/>
 </g>
</svg>
<div class="abs" style="left:14px;top:546px;width:62px;text-align:center;font-size:12.5px;line-height:17px;color:#111">No.</div>
<div class="abs" style="left:76px;top:546px;width:71px;text-align:center;font-size:12.5px;line-height:17px;color:#111">最小剥离力<br>(gf)</div>
<div class="abs" style="left:147px;top:546px;width:71px;text-align:center;font-size:12.5px;line-height:17px;color:#111">最大剥离力<br>(gf)</div>
<div class="abs" style="left:218px;top:546px;width:71px;text-align:center;font-size:12.5px;line-height:17px;color:#111">平均剥离力<br>(gf)</div>
<div class="abs" style="left:14px;top:583px;width:62px;text-align:center;font-size:12px;line-height:16px;color:#111">1</div>
<div class="abs" style="left:76px;top:583px;width:71px;text-align:center;font-size:12px;line-height:16px;color:#111">717.345</div>
<div class="abs" style="left:147px;top:583px;width:71px;text-align:center;font-size:12px;line-height:16px;color:#111">775.509</div>
<div class="abs" style="left:218px;top:583px;width:71px;text-align:center;font-size:12px;line-height:16px;color:#111">744.856</div>

<!-- joystick -->
<svg class="abs" style="left:940px;top:350px" width="220" height="200">
 <defs>
  <linearGradient id="endg" x1="0" y1="0" x2="0" y2="1"><stop offset="0" stop-color="#f4889a"/><stop offset="0.5" stop-color="#d83444"/><stop offset="1" stop-color="#a60414"/></linearGradient>
 </defs>
 <circle cx="109" cy="101" r="90.5" fill="none" stroke="#2b8cae" stroke-width="2.4"/>
 <g transform="translate(-940,-350)">
  <path d="M1031,367.3 H1069.6 Q1077.6,367.3 1077.6,375.3 V424 H1124.6 Q1132.6,424 1132.6,432 V470.3 Q1132.6,478.3 1124.6,478.3 H1077.6 V526.1 Q1077.6,534.1 1069.6,534.1 H1031 Q1023,534.1 1023,526.1 V478.3 H972.9 Q964.9,478.3 964.9,470.3 V432 Q964.9,424 972.9,424 H1023 V375.3 Q1023,367.3 1031,367.3 Z" fill="#8d99a5" transform="translate(1.3,1.3)"/>
  <path d="M1031,367.3 H1069.6 Q1077.6,367.3 1077.6,375.3 V424 H1124.6 Q1132.6,424 1132.6,432 V470.3 Q1132.6,478.3 1124.6,478.3 H1077.6 V526.1 Q1077.6,534.1 1069.6,534.1 H1031 Q1023,534.1 1023,526.1 V478.3 H972.9 Q964.9,478.3 964.9,470.3 V432 Q964.9,424 972.9,424 H1023 V375.3 Q1023,367.3 1031,367.3 Z" fill="#0e1826" transform="translate(-1,-1)"/>
  <path d="M1031,367.3 H1069.6 Q1077.6,367.3 1077.6,375.3 V424 H1124.6 Q1132.6,424 1132.6,432 V470.3 Q1132.6,478.3 1124.6,478.3 H1077.6 V526.1 Q1077.6,534.1 1069.6,534.1 H1031 Q1023,534.1 1023,526.1 V478.3 H972.9 Q964.9,478.3 964.9,470.3 V432 Q964.9,424 972.9,424 H1023 V375.3 Q1023,367.3 1031,367.3 Z" fill="#38b2d8"/>
  <!-- up arrow -->
  <polygon points="1050.9,376.8 1069.4,396.6 1061.5,396.6 1061.5,400 1040.1,400 1040.1,396.6 1032.4,396.6" fill="#fff"/>
  <rect x="1040.1" y="401.8" width="21.4" height="4.2" fill="#fff"/><rect x="1040.1" y="407.4" width="21.4" height="3" fill="#fff"/>
  <line x1="1040.1" y1="411" x2="1061.5" y2="411" stroke="#0a1a20" stroke-width="1"/>
  <line x1="1040.1" y1="406.7" x2="1061.5" y2="406.7" stroke="#0a1a20" stroke-width="1"/>
  <line x1="1040.1" y1="401" x2="1061.5" y2="401" stroke="#0a1a20" stroke-width="1"/>
  <!-- down arrow -->
  <rect x="1040" y="494" width="20.2" height="2.8" fill="#fff"/><line x1="1040" y1="497.5" x2="1060.2" y2="497.5" stroke="#0a1a20" stroke-width="1"/>
  <polygon points="1040,498.2 1060.2,498.2 1060.2,508.4 1067.8,508.4 1049.9,527.6 1031.9,508.4 1040,508.4" fill="#fff"/>
  <line x1="1040" y1="503.3" x2="1060.2" y2="503.3" stroke="#0a1a20" stroke-width="0.8"/>
  <!-- pause -->
  <rect x="981.6" y="437" width="9.5" height="27" fill="#fff"/><rect x="998.8" y="437" width="9.2" height="27" fill="#fff"/>
  <!-- play -->
  <polygon points="1092.4,434.7 1092.4,468 1123,451.3" fill="#fff"/>
  <!-- end -->
  <circle cx="1050" cy="453.6" r="33" fill="#1f6282" opacity="0.85"/>
  <circle cx="1050" cy="452.2" r="31" fill="url(#endg)" stroke="#6e0c14" stroke-width="1.4"/>
  <path d="M1021,462 A30.5,30.5 0 0 0 1079,462" fill="none" stroke="#e8808e" stroke-width="1.8"/>
  <text x="1032" y="467.2" font-family="Liberation Sans" font-weight="bold" font-size="47" fill="#fff" stroke="#fff" stroke-width="0.9" textLength="37" lengthAdjust="spacingAndGlyphs">END</text>
 </g>
</svg>

<!-- side buttons -->
<div class="btn" style="left:1180px;top:361px;width:76px;height:34px"></div>
<div class="btn" style="left:1180px;top:503px;width:76px;height:34px"></div>
<svg class="abs" style="left:1180px;top:355px" width="83" height="190">
 <defs><linearGradient id="icg" x1="0" y1="0" x2="0" y2="1"><stop offset="0" stop-color="#4ec6d8"/><stop offset="1" stop-color="#70e4f0"/></linearGradient></defs>
 <circle cx="20.9" cy="22.5" r="13" fill="url(#icg)"/>
 <ellipse cx="22.5" cy="23" rx="5" ry="9" fill="none" stroke="#fff" stroke-width="2.3"/>
 <line x1="12" y1="14" x2="30" y2="32" stroke="#fff" stroke-width="1.5"/>
 <polygon points="10.5,12.5 15.5,14 12,17.5" fill="#fff"/>
 <circle cx="20.2" cy="163.9" r="12.5" fill="url(#icg)"/>
 <path d="M14,159 H22 A5.5,5.5 0 0 1 22,170 H14" fill="none" stroke="#fff" stroke-width="3.2"/>
 <polygon points="9,158.5 17,153 17,164" fill="#fff"/>
</svg>
<div class="abs" style="left:1220px;top:369px;color:#fff;font-size:13px">清零</div>
<div class="abs" style="left:1220px;top:511px;color:#fff;font-size:13px">回位</div>

<!-- jog buttons -->
<div class="btn" style="left:949px;top:557px;width:105px;height:26px;border-width:1.5px"></div>
<div class="btn" style="left:1151px;top:557px;width:105px;height:26px;border-width:1.5px"></div>
<svg class="abs" style="left:940px;top:550px" width="320" height="50">
 <polygon points="32.3,11 41,21 38,21 38,23 27.5,23 27.5,21 24,21" fill="#fff"/>
 <rect x="27.5" y="23.8" width="10.5" height="1.6" fill="#fff"/><rect x="27.5" y="26.3" width="10.5" height="1.6" fill="#fff"/>
 <rect x="229.5" y="10" width="10.5" height="1.6" fill="#ddd"/><rect x="229.5" y="12.5" width="10.5" height="1.6" fill="#ddd"/>
 <polygon points="229.5,15 240,15 240,18.4 243.3,18.4 235,27.9 226.7,18.4 229.5,18.4" fill="#fff"/>
 <!-- spinner -->
 <path d="M130.4,17.9 L135.9,25 Q136.2,27.4 134,27.4 H127 Q124.8,27.4 125.1,25 Z" fill="#4a92e4"/>
 <path d="M130.4,40 L135.9,33 Q136.2,30.9 134,30.9 H127 Q124.8,30.9 125.1,33 Z" fill="#4a92e4"/>
 <rect x="135.1" y="17.5" width="66" height="26" fill="#12202f"/>
 <path d="M201.1,17.5 V43.5 H135.1 L138.7,40 H197.1 V20.9 Z" fill="#2f4866"/>
 <rect x="138.7" y="20.9" width="58.4" height="19.1" fill="#e0e0e0"/>
</svg>
<div class="abs" style="left:991px;top:563px;color:#fff;font-size:12.5px;letter-spacing:-0.3px">寸动上升</div>
<div class="abs" style="left:1192px;top:563px;color:#fff;font-size:12.5px;letter-spacing:-0.3px">寸动下降</div>
<div class="abs" style="left:1068px;top:549px;color:#fff;font-size:12.5px">距离(mm)</div>
<div class="abs" style="left:1079px;top:573px;width:58px;text-align:center;color:#111;font-size:12px">50</div>

<!-- speed -->
<div class="vbox" style="left:949px;width:307px;top:602px;height:30px;box-shadow:inset 1px 1px 0 #eef0f2"><div class="abs" style="left:30px;top:4px;font-size:15.5px;color:#111">速度(mm/min)</div><div class="vsep" style="left:157px;top:11px;height:10px;width:1.5px"></div><div class="abs" style="left:209px;top:6px;font-size:14.6px;color:#111">300.000</div></div>
<svg class="abs" style="left:940px;top:630px" width="323" height="45">
 <defs><radialGradient id="thg" cx="0.5" cy="0.5" r="0.5"><stop offset="0" stop-color="#f4f4f4"/><stop offset="0.7" stop-color="#c8c8c8"/><stop offset="1" stop-color="#8a8a8a"/></radialGradient></defs>
 <rect x="16" y="9.3" width="293" height="10" rx="5" fill="#0f1c2a"/>
 <rect x="17" y="10" width="290" height="8.8" rx="4.4" fill="#3fb4dc"/>
 <circle cx="304.9" cy="12.9" r="9.6" fill="url(#thg)" stroke="#777" stroke-width="0.6"/>
 <g stroke="#fff" stroke-width="1.3">
 <line x1="22.1" y1="22.6" x2="22.1" y2="28"/>
 <line x1="31.5" y1="22.6" x2="31.5" y2="26"/>
 <line x1="40.9" y1="22.6" x2="40.9" y2="26"/>
 <line x1="50.3" y1="22.6" x2="50.3" y2="26"/>
 <line x1="59.7" y1="22.6" x2="59.7" y2="26"/>
 <line x1="69.1" y1="22.6" x2="69.1" y2="28"/>
 <line x1="78.5" y1="22.6" x2="78.5" y2="26"/>
 <line x1="87.9" y1="22.6" x2="87.9" y2="26"/>
 <line x1="97.3" y1="22.6" x2="97.3" y2="26"/>
 <line x1="106.7" y1="22.6" x2="106.7" y2="26"/>
 <line x1="116.1" y1="22.6" x2="116.1" y2="28"/>
 <line x1="125.5" y1="22.6" x2="125.5" y2="26"/>
 <line x1="134.9" y1="22.6" x2="134.9" y2="26"/>
 <line x1="144.3" y1="22.6" x2="144.3" y2="26"/>
 <line x1="153.7" y1="22.6" x2="153.7" y2="26"/>
 <line x1="163.2" y1="22.6" x2="163.2" y2="28"/>
 <line x1="172.6" y1="22.6" x2="172.6" y2="26"/>
 <line x1="182.0" y1="22.6" x2="182.0" y2="26"/>
 <line x1="191.4" y1="22.6" x2="191.4" y2="26"/>
 <line x1="200.8" y1="22.6" x2="200.8" y2="26"/>
 <line x1="210.2" y1="22.6" x2="210.2" y2="28"/>
 <line x1="219.6" y1="22.6" x2="219.6" y2="26"/>
 <line x1="229.0" y1="22.6" x2="229.0" y2="26"/>
 <line x1="238.4" y1="22.6" x2="238.4" y2="26"/>
 <line x1="247.8" y1="22.6" x2="247.8" y2="26"/>
 <line x1="257.2" y1="22.6" x2="257.2" y2="28"/>
 <line x1="266.6" y1="22.6" x2="266.6" y2="26"/>
 <line x1="276.0" y1="22.6" x2="276.0" y2="26"/>
 <line x1="285.4" y1="22.6" x2="285.4" y2="26"/>
 <line x1="294.8" y1="22.6" x2="294.8" y2="26"/>
 <line x1="304.2" y1="22.6" x2="304.2" y2="28"/>
 </g>
 <g font-family="Liberation Sans" font-size="10" fill="#fff" text-anchor="middle">
  <text x="20.9" y="39.5">0. 1</text><text x="68.3" y="39.5">50</text><text x="116.2" y="39.5">100</text><text x="163" y="39.5">150</text><text x="209.2" y="39.5">200</text><text x="256.5" y="39.5">250</text><text x="303.3" y="39.5">300</text>
 </g>
</svg>

<!-- status bar -->
<div class="st" style="left:42px">硬件状态:</div>
<div class="st" style="left:120px">[连接断开]</div>
<div class="st" style="left:227px">机器状态:</div>
<div class="st" style="left:293px">停止</div>
<div class="st" style="left:384px">力传感器:</div>
<div class="st" style="left:526px">测试标准:</div>
<div class="st" style="left:592px;font-size:12.4px">GB/T 2792-2014 胶粘带剥离强度的测试方法</div>
<svg class="abs" style="left:896px;top:678px" width="16" height="9"><polygon points="0,0 15,0 7.5,8" fill="#fff"/></svg>
</body></html>
